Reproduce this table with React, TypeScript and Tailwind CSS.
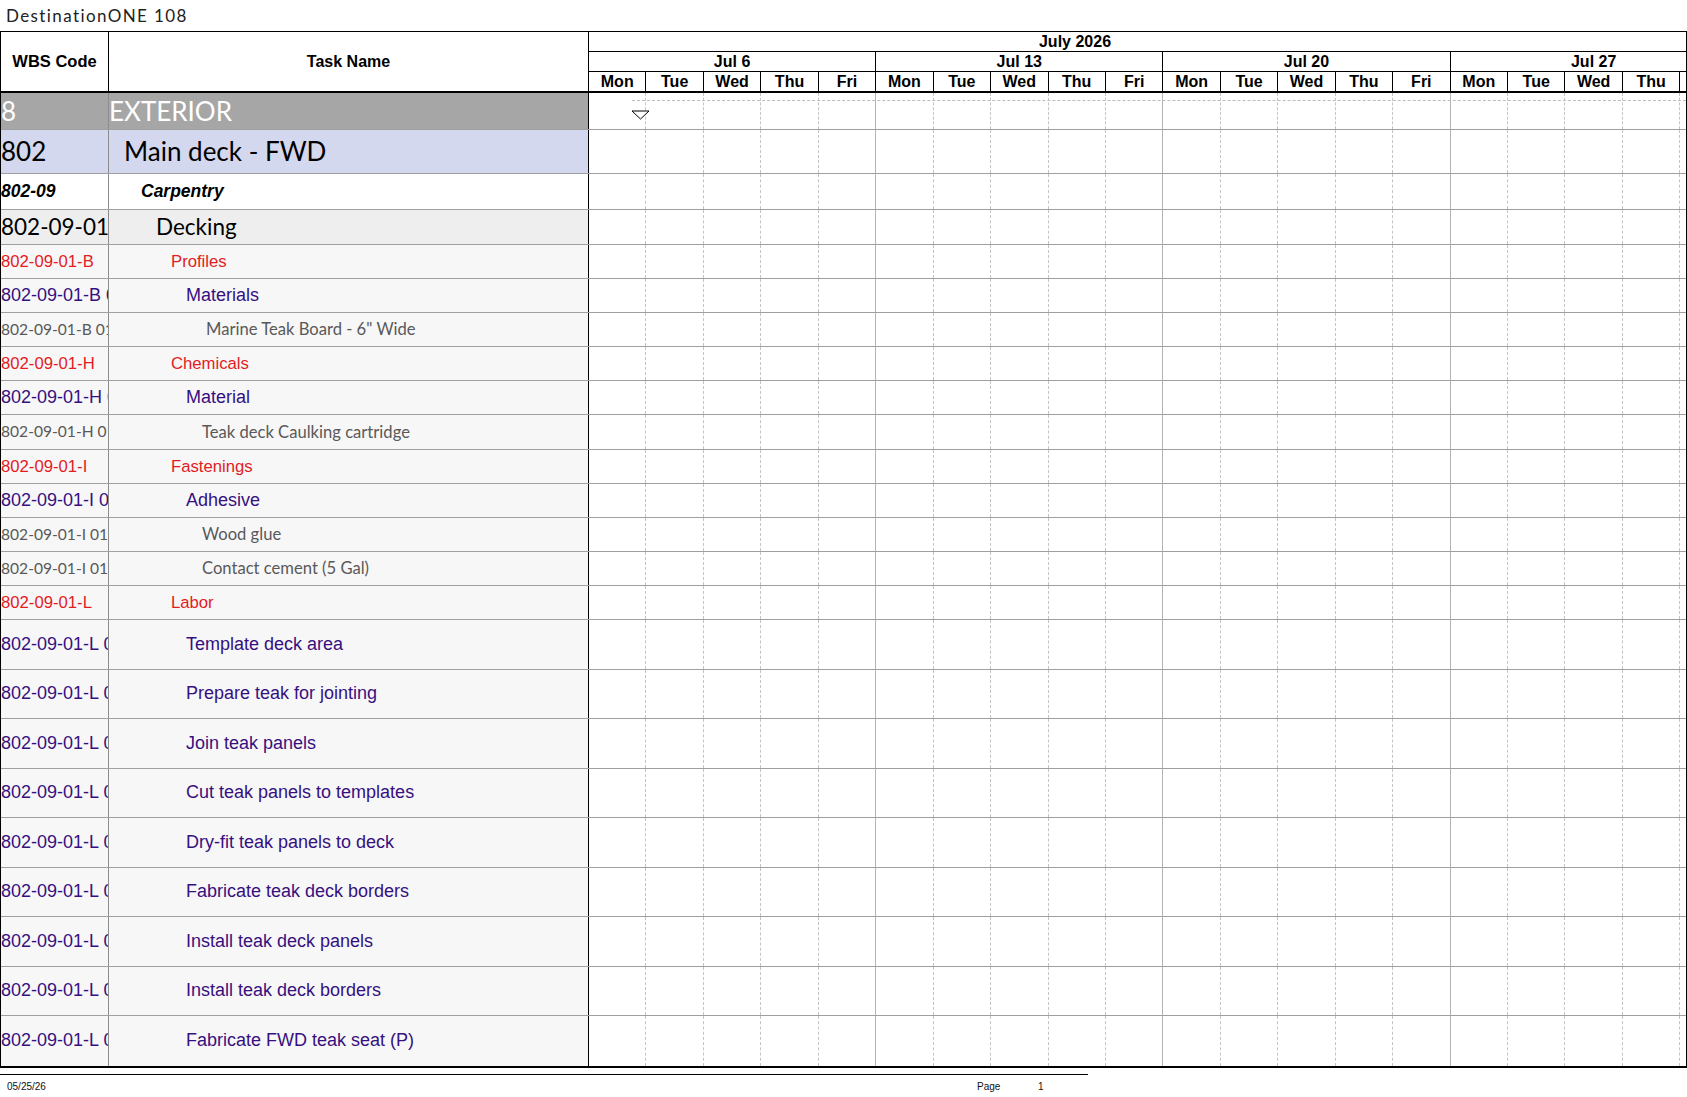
import React from 'react';

type Kind = 'ext' | 'area' | 'trade' | 'group' | 'cat' | 'sub' | 'item' | 'task';

type Row = { wbs: string; name: string; kind: Kind; indent?: string };

const rows: Row[] = [
  { wbs: '8', name: 'EXTERIOR', kind: 'ext' },
  { wbs: '802', name: 'Main deck - FWD', kind: 'area' },
  { wbs: '802-09', name: 'Carpentry', kind: 'trade' },
  { wbs: '802-09-01', name: 'Decking', kind: 'group' },
  { wbs: '802-09-01-B', name: 'Profiles', kind: 'cat' },
  { wbs: '802-09-01-B 01', name: 'Materials', kind: 'sub' },
  { wbs: '802-09-01-B 01.01', name: 'Marine Teak Board - 6" Wide', kind: 'item', indent: 'pl-[97px]' },
  { wbs: '802-09-01-H', name: 'Chemicals', kind: 'cat' },
  { wbs: '802-09-01-H 01', name: 'Material', kind: 'sub' },
  { wbs: '802-09-01-H 01.01', name: 'Teak deck Caulking cartridge', kind: 'item' },
  { wbs: '802-09-01-I', name: 'Fastenings', kind: 'cat' },
  { wbs: '802-09-01-I 01', name: 'Adhesive', kind: 'sub' },
  { wbs: '802-09-01-I 01.01', name: 'Wood glue', kind: 'item' },
  { wbs: '802-09-01-I 01.02', name: 'Contact cement (5 Gal)', kind: 'item' },
  { wbs: '802-09-01-L', name: 'Labor', kind: 'cat' },
  { wbs: '802-09-01-L 01', name: 'Template deck area', kind: 'task' },
  { wbs: '802-09-01-L 02', name: 'Prepare teak for jointing', kind: 'task' },
  { wbs: '802-09-01-L 03', name: 'Join teak panels', kind: 'task' },
  { wbs: '802-09-01-L 04', name: 'Cut teak panels to templates', kind: 'task' },
  { wbs: '802-09-01-L 05', name: 'Dry-fit teak panels to deck', kind: 'task' },
  { wbs: '802-09-01-L 06', name: 'Fabricate teak deck borders', kind: 'task' },
  { wbs: '802-09-01-L 07', name: 'Install teak deck panels', kind: 'task' },
  { wbs: '802-09-01-L 08', name: 'Install teak deck borders', kind: 'task' },
  { wbs: '802-09-01-L 09', name: 'Fabricate FWD teak seat (P)', kind: 'task' },
];

const styles: Record<Kind, { h: string; bg: string; text: string; wbs?: string; indent: string }> = {
  ext: { h: 'h-[37px]', bg: 'bg-[#a6a6a6]', text: "font-['Lato',sans-serif] text-[26px] text-white", indent: 'pl-0' },
  area: { h: 'h-[44px]', bg: 'bg-[#d4d8ee]', text: "font-['Lato',sans-serif] text-[26px] text-black", indent: 'pl-[15px]' },
  trade: { h: 'h-[36px]', bg: 'bg-white', text: 'font-bold italic text-[17.5px] text-black', indent: 'pl-[32px]' },
  group: { h: 'h-[35px]', bg: 'bg-[#eeeeee]', text: "font-['Lato',sans-serif] text-[22.5px] text-black", indent: 'pl-[47px]' },
  cat: { h: 'h-[34.1px]', bg: 'bg-[#f7f7f7]', text: 'text-[16.7px] text-[#e31b23]', indent: 'pl-[62px]' },
  sub: { h: 'h-[34.1px]', bg: 'bg-[#f7f7f7]', text: 'text-[18px] text-[#36107f]', indent: 'pl-[77px]' },
  item: {
    h: 'h-[34.1px]',
    bg: 'bg-[#f7f7f7]',
    text: "font-['Lato',sans-serif] text-[16.6px] text-[#595959]",
    wbs: "font-['Lato',sans-serif] text-[15.6px] text-[#595959]",
    indent: 'pl-[93px]',
  },
  task: { h: 'h-[49.5px]', bg: 'bg-[#f7f7f7]', text: 'text-[18px] text-[#36107f]', indent: 'pl-[77px]' },
};

const weeks = ['Jul 6', 'Jul 13', 'Jul 20', 'Jul 27'];
const days = ['Mon', 'Tue', 'Wed', 'Thu', 'Fri'];
const dayIdx = Array.from({ length: 20 }, (_, i) => i);

function GanttCells() {
  return (
    <div className="grid h-full grid-cols-[repeat(20,57.44px)]">
      {dayIdx.map((i) =>
        i % 5 === 4 ? (
          <div key={i} className="border-r border-[#b4b4b4]" />
        ) : (
          <div key={i} className="border-r border-dashed border-[#c4c4c4]" />
        )
      )}
    </div>
  );
}

function TableRow({ row, last }: { row: Row; last: boolean }) {
  const s = styles[row.kind];
  return (
    <div className={`flex ${s.h} ${last ? '' : 'border-b border-[#a0a0a0]'}`}>
      <div
        className={`flex w-[108px] shrink-0 items-center overflow-hidden whitespace-nowrap border-r border-[#8c8c8c] ${s.bg} ${s.wbs ?? s.text}`}
      >
        {row.wbs}
      </div>
      <div
        className={`flex w-[480px] shrink-0 items-center whitespace-nowrap border-r border-black ${s.bg} ${s.text} ${row.indent ?? s.indent}`}
      >
        {row.name}
      </div>
      <div className="relative min-w-0 flex-1 overflow-hidden bg-white">
        <GanttCells />
        {row.kind === 'ext' && (
          <>
            <div className="absolute left-[43px] right-0 top-[7px] border-t border-dashed border-[#bcbcbc]" />
            <svg className="absolute left-[42px] top-[17px]" width="19" height="10" viewBox="0 0 19 10">
              <polygon points="1,1 18,1 9.5,9" fill="white" stroke="black" strokeWidth="1" />
            </svg>
          </>
        )}
      </div>
    </div>
  );
}

export default function App() {
  return (
    <div className="h-[1097px] w-[1687px] overflow-hidden bg-white font-['Liberation_Sans',Arial,sans-serif] text-black">
      <div className="h-[31px] pl-[6px] pt-[7px] font-['Lato',sans-serif] text-[17px] leading-[17px] tracking-[1.4px] text-[#222]">
        DestinationONE 108
      </div>

      <div className="w-[1687px] border-x border-t border-b-2 border-black">
        {/* header */}
        <div className="flex h-[61px] border-b-2 border-black">
          <div className="flex w-[108px] shrink-0 items-center justify-center border-r border-black text-[16.5px] font-bold">
            WBS Code
          </div>
          <div className="flex w-[480px] shrink-0 items-center justify-center border-r border-black text-[16px] font-bold">
            Task Name
          </div>
          <div className="min-w-0 flex-1 overflow-hidden text-[16px] font-bold leading-none">
            <div className="flex h-[20px] items-center border-b border-black">
              <div className="w-[972px] shrink-0 text-center">July 2026</div>
            </div>
            <div className="grid h-[20px] grid-cols-[repeat(4,287.2px)] border-b border-black">
              {weeks.map((w) => (
                <div key={w} className="flex items-center justify-center border-r border-black">
                  {w}
                </div>
              ))}
            </div>
            <div className="grid h-[19px] grid-cols-[repeat(20,57.44px)]">
              {dayIdx.map((i) => (
                <div key={i} className="flex items-center justify-center border-r border-black">
                  {days[i % 5]}
                </div>
              ))}
            </div>
          </div>
        </div>

        {/* body */}
        {rows.map((r, i) => (
          <TableRow key={i} row={r} last={i === rows.length - 1} />
        ))}
      </div>

      {/* footer */}
      <div className="mt-[6px] w-[1088px] border-t border-black" />
      <div className="mt-[6px] flex text-[10px] leading-[12px] text-[#111]">
        <span className="w-[977px] shrink-0 pl-[7px]">05/25/26</span>
        <span className="w-[61px] shrink-0">Page</span>
        <span>1</span>
      </div>
    </div>
  );
}
